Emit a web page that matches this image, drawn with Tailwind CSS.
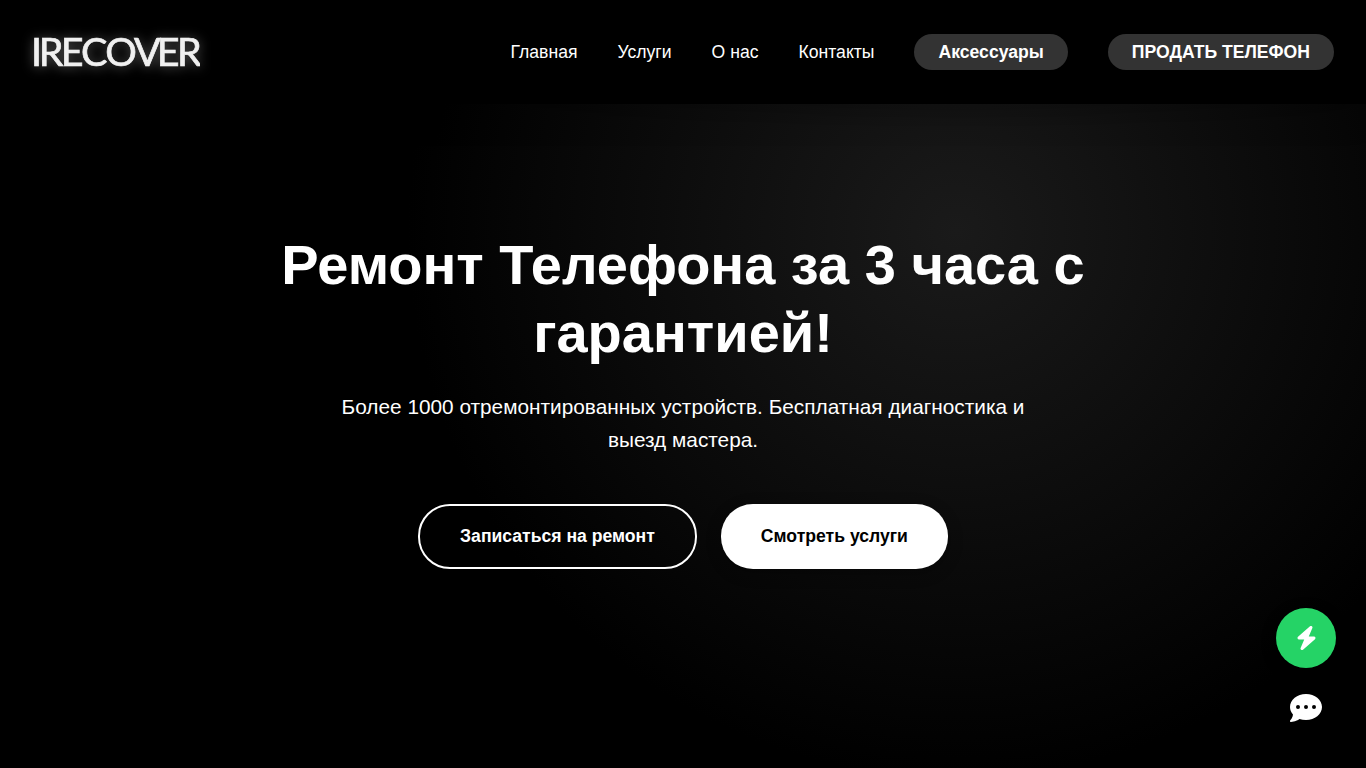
<!DOCTYPE html>
<html lang="ru">

<head>
  <meta charset="UTF-8">
  <meta name="viewport" content="width=device-width, initial-scale=1.0">
  <script src="https://cdn.jsdelivr.net/npm/@tailwindcss/browser@4"></script>
  <title>IRECOVER</title>
</head>

<body class="bg-black text-white font-['Liberation_Sans',Arial,sans-serif] overflow-hidden">
  <div class="h-screen flex flex-col bg-[radial-gradient(circle_at_70%_30%,#1a1a1a_0%,#000_50%)]">
    <!-- Header -->
    <header class="h-[104px] shrink-0 px-8 flex justify-between items-center bg-black shadow-[0_6px_32px_rgba(0,0,0,0.3)]">
      <a href="#" aria-label="IRECOVER">
        <svg class="w-[168px] h-10 overflow-hidden drop-shadow-[0_1px_6px_rgba(255,255,255,0.35)]" viewBox="0 0 168 40" fill="#f0f0f0" stroke="#f0f0f0" stroke-width="0.7">
          <text y="34.3" font-family="Lato, sans-serif" font-size="39.5" x="-1 6.7 28.7 48.900 73.3 102 124.8 145">IRECOVER</text>
        </svg>
      </a>
      <nav class="flex items-center gap-10 text-[17.6px] leading-5">
        <a href="#">Главная</a>
        <a href="#">Услуги</a>
        <a href="#">О нас</a>
        <a href="#">Контакты</a>
        <a href="#" class="bg-[#333] rounded-full px-6 py-2 font-bold">Аксессуары</a>
        <a href="#" class="bg-[#333] rounded-full px-6 py-2 font-bold">ПРОДАТЬ ТЕЛЕФОН</a>
      </nav>
    </header>

    <!-- Hero -->
    <main class="flex flex-col items-center text-center pt-[127.4px]">
      <h1 class="w-[900px] text-[56px] leading-[67.2px] font-bold">Ремонт Телефона за 3 часа с гарантией!</h1>
      <p class="w-[700px] mt-6 text-[20.8px] leading-[33.28px]">Более 1000 отремонтированных устройств. Бесплатная диагностика и выезд мастера.</p>
      <div class="flex gap-6 mt-[47.6px] text-[17.6px] font-bold">
        <a href="#" class="h-[65px] px-10 flex items-center border-2 border-white rounded-[32px]">Записаться на ремонт</a>
        <a href="#" class="h-[65px] px-10 flex items-center bg-white text-black rounded-[32px] shadow-[0_4px_15px_rgba(0,0,0,0.3)]">Смотреть услуги</a>
      </div>
    </main>
  </div>

  <!-- Floating contact buttons -->
  <div class="fixed right-[30px] bottom-[30px] flex flex-col items-center gap-2.5">
    <button class="size-[60px] rounded-full bg-[#25d366] flex items-center justify-center shadow-[0_4px_15px_rgba(0,0,0,0.3)]">
      <svg class="w-[21px] h-6" viewBox="0 0 448 512" fill="currentColor">
        <path d="M349.4 44.6c5.9-13.7 1.5-29.7-10.6-38.5s-28.6-8-39.9 1.800l-256 224c-10 8.800-13.600 22.900-8.900 35.300S50.700 288 64 288H175.500L98.600 467.400c-5.900 13.700-1.500 29.700 10.600 38.500s28.600 8 39.900-1.800l256-224c10-8.800 13.600-22.900 8.900-35.300s-16.600-20.700-30-20.700H272.500L349.400 44.600z" />
      </svg>
    </button>
    <button class="size-[60px] flex items-center justify-center">
      <svg class="size-8" viewBox="0 0 512 512" fill="currentColor">
        <path d="M256 448c141.400 0 256-93.100 256-208S397.400 32 256 32S0 125.100 0 240c0 45.100 17.700 86.800 47.700 120.900c-1.900 24.500-11.400 46.300-21.400 62.900c-5.500 9.200-11.100 16.600-15.200 21.600c-2.100 2.500-3.700 4.400-4.900 5.700c-.6 .6-1 1.100-1.300 1.400l-.3 .3c-4.600 4.600-5.900 11.400-3.400 17.400c2.500 6 8.300 9.900 14.800 9.900c28.700 0 57.600-8.900 81.600-19.300c22.900-10 42.400-21.900 54.300-30.600c31.800 11.500 67 17.900 104.100 17.900zM128 208a32 32 0 1 1 0 64 32 32 0 1 1 0-64zm128 0a32 32 0 1 1 0 64 32 32 0 1 1 0-64zm96 32a32 32 0 1 1 64 0 32 32 0 1 1 -64 0z" />
      </svg>
    </button>
  </div>
</body>

</html>
